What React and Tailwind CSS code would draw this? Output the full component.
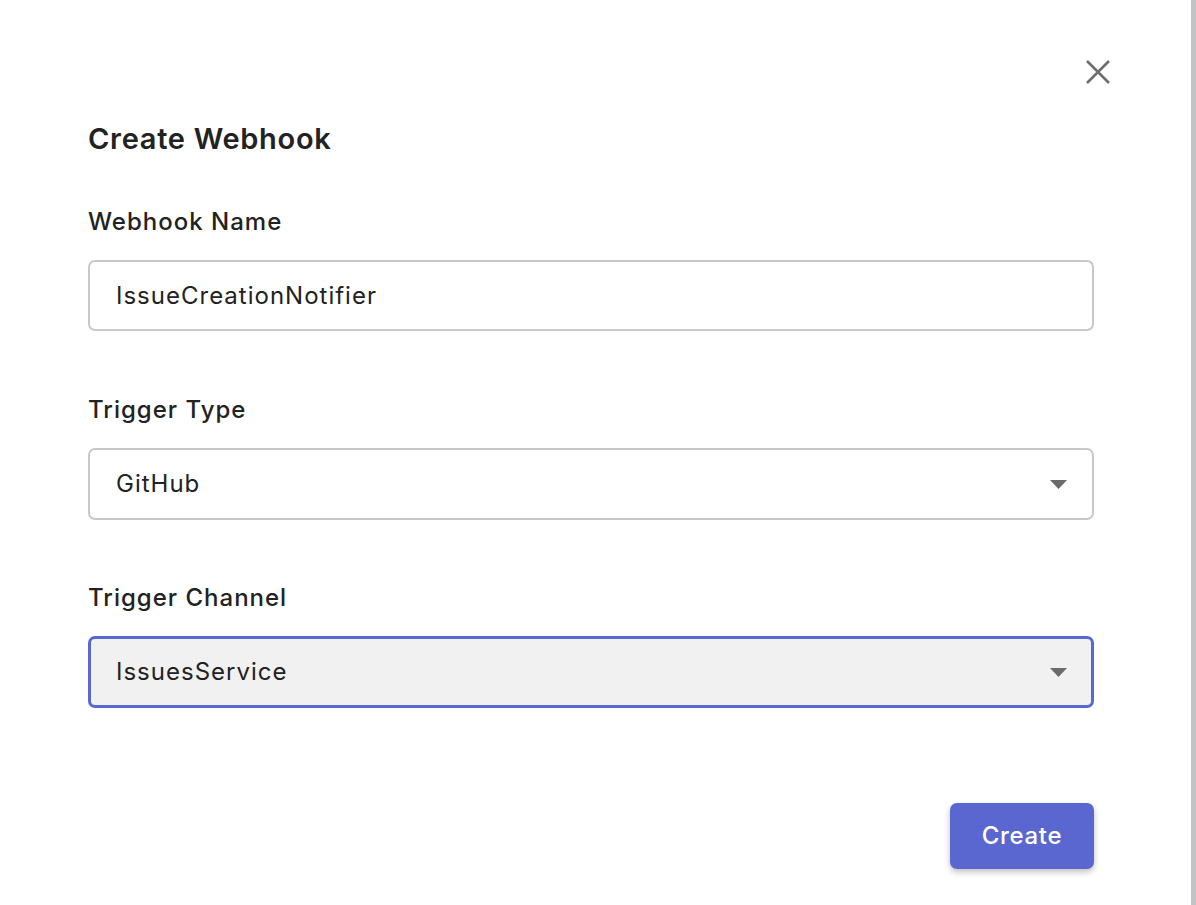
import React from "react";

function Caret() {
  return (
    <svg width="17" height="9" viewBox="0 0 17 9" className="shrink-0">
      <path d="M0 0 H17 L8.5 9 Z" fill="#6b6b6b" />
    </svg>
  );
}

export default function App() {
  return (
    <div
      className="flex h-[905px] w-[1196px] overflow-hidden bg-white"
      style={{ fontFamily: "Inter, 'Noto Sans', sans-serif" }}
    >
      <div className="relative flex-1 bg-white pl-[88px] pr-[97px]">
        <button className="absolute left-[1084px] top-[58px] flex h-[28px] w-[28px] items-center justify-center">
          <svg width="26" height="26" viewBox="0 0 26 26">
            <path d="M2 2 L24 24 M24 2 L2 24" stroke="#6e6e6e" strokeWidth="2.6" />
          </svg>
        </button>
        <h1 className="mt-[122px] text-[29px] font-semibold leading-[34px] tracking-[0.7px] text-[#222]">
          Create Webhook
        </h1>

        <label className="mt-[51px] block text-[24px] font-medium leading-[30px] tracking-[1px] text-[#222]">
          Webhook Name
        </label>
        <div className="mt-[23px] flex h-[71px] items-center rounded-[7px] border-2 border-[#c8c8c8] px-[26px] text-[24px] tracking-[1px] text-[#222]">
          IssueCreationNotifier
        </div>

        <label className="mt-[64px] block text-[24px] font-medium leading-[30px] tracking-[1px] text-[#222]">
          Trigger Type
        </label>
        <div className="mt-[23px] flex h-[72px] items-center justify-between rounded-[7px] border-2 border-[#c8c8c8] pl-[26px] pr-[25px] text-[24px] tracking-[1px] text-[#222]">
          <span>GitHub</span>
          <Caret />
        </div>

        <label className="mt-[63px] block text-[24px] font-medium leading-[30px] tracking-[1px] text-[#222]">
          Trigger Channel
        </label>
        <div className="mt-[23px] flex h-[72px] items-center justify-between rounded-[7px] border-[3px] border-[#5a66d1] bg-[#f1f1f1] pl-[25px] pr-[24px] text-[24px] tracking-[1px] text-[#222]">
          <span>IssuesService</span>
          <Caret />
        </div>

        <div className="mt-[95px] flex justify-end">
          <button className="flex h-[66px] w-[144px] items-center justify-center rounded-[7px] bg-[#5a67d0] text-[24px] font-medium tracking-[0.7px] text-white shadow-[0_3px_6px_rgba(0,0,0,0.25)]">
            Create
          </button>
        </div>
      </div>
      <div className="w-[5px] bg-[#c3c3c6]" />
    </div>
  );
}
